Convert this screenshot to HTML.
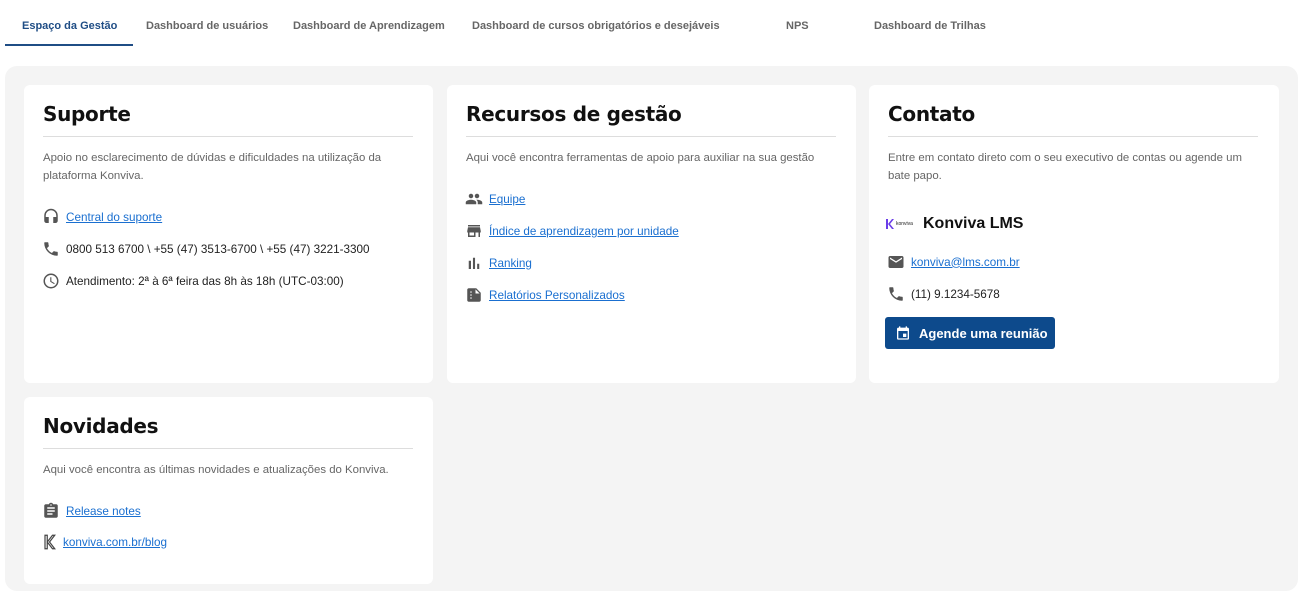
<!DOCTYPE html>
<html><head><meta charset="utf-8"><style>
*{box-sizing:border-box;margin:0;padding:0}
body{width:1300px;height:596px;background:#fff;font-family:"Liberation Sans",Arial,sans-serif;position:relative;overflow:hidden;color:#222}
.tab{position:absolute;top:20px;font-size:11px;font-weight:bold;color:#666;white-space:nowrap}
.tab.act{color:#1f4d85}
.ul{position:absolute;left:5px;top:44px;width:128px;height:2px;background:#1f4d85}
.wrap{position:absolute;left:5px;top:66px;width:1293px;height:525px;background:#f4f4f4;border-radius:12px}
.card{position:absolute;background:#fff;border-radius:6px}
.card h2{position:absolute;left:19px;top:17px;font-size:20px;font-weight:bold;color:#111;font-family:"DejaVu Sans","Liberation Sans",sans-serif;letter-spacing:-0.3px}
.card .hr{position:absolute;left:19px;top:51px;width:370px;height:1px;background:#ddd}
.card .d{position:absolute;left:19px;top:64px;width:360px;font-size:11.4px;line-height:18px;color:#666}
.it{position:absolute;left:18px;font-size:11.7px;color:#222;display:flex;align-items:center;white-space:nowrap}
.it svg{width:18px;height:18px;fill:#555;margin-right:6px}
a{color:#1a6fd0;text-decoration:underline}
.btn{position:absolute;left:16px;top:232px;width:170px;height:32px;background:#0d4a8c;border-radius:3px;color:#fff;font-weight:bold;font-size:13px;display:flex;align-items:center;padding-left:10px}
.btn svg{width:16px;height:16px;fill:#fff;margin-right:8px}
</style></head><body>
<div class="tab act" style="left:22px">Espaço da Gestão</div>
<div class="tab" style="left:146px">Dashboard de usuários</div>
<div class="tab" style="left:293px">Dashboard de Aprendizagem</div>
<div class="tab" style="left:472px">Dashboard de cursos obrigatórios e desejáveis</div>
<div class="tab" style="left:786px">NPS</div>
<div class="tab" style="left:874px">Dashboard de Trilhas</div>
<div class="ul"></div>
<div class="wrap"></div>

<div class="card" style="left:24px;top:85px;width:409px;height:298px">
<h2>Suporte</h2><div class="hr"></div>
<div class="d">Apoio no esclarecimento de dúvidas e dificuldades na utilização da plataforma Konviva.</div>
<div class="it" style="top:123px"><svg viewBox="0 0 24 24"><path d="M12 1a9 9 0 0 0-9 9v7a3 3 0 0 0 3 3h3v-8H5v-2a7 7 0 0 1 14 0v2h-4v8h3a3 3 0 0 0 3-3v-7a9 9 0 0 0-9-9z"/></svg><a>Central do suporte</a></div>
<div class="it" style="top:155px"><svg viewBox="0 0 24 24"><path d="M6.6 10.8a15.1 15.1 0 0 0 6.6 6.6l2.2-2.2c.3-.3.7-.4 1-.2 1.1.4 2.3.6 3.6.6.6 0 1 .4 1 1V20c0 .6-.4 1-1 1A17 17 0 0 1 3 4c0-.6.4-1 1-1h3.5c.6 0 1 .4 1 1 0 1.3.2 2.5.6 3.6.1.3 0 .7-.2 1z"/></svg>0800 513 6700 \ +55 (47) 3513-6700 \ +55 (47) 3221-3300</div>
<div class="it" style="top:187px"><svg viewBox="0 0 24 24"><path d="M12 2a10 10 0 1 0 0 20 10 10 0 0 0 0-20zm0 18a8 8 0 1 1 0-16 8 8 0 0 1 0 16zm.5-13H11v6l5.2 3.2.8-1.2-4.5-2.7z"/></svg>Atendimento: 2ª à 6ª feira das 8h às 18h (UTC-03:00)</div>
</div>

<div class="card" style="left:447px;top:85px;width:409px;height:298px">
<h2>Recursos de gestão</h2><div class="hr"></div>
<div class="d">Aqui você encontra ferramentas de apoio para auxiliar na sua gestão</div>
<div class="it" style="top:105px"><svg viewBox="0 0 24 24"><path d="M16 11a3 3 0 1 0 0-6 3 3 0 0 0 0 6zm-8 0a3 3 0 1 0 0-6 3 3 0 0 0 0 6zm0 2c-2.3 0-7 1.2-7 3.5V19h14v-2.5C15 14.2 10.3 13 8 13zm8 0h-1c1.2.8 2 2 2 3.5V19h6v-2.5c0-2.3-4.7-3.5-7-3.5z"/></svg><a>Equipe</a></div>
<div class="it" style="top:137px"><svg viewBox="0 0 24 24"><path d="M20 4H4v2h16V4zm1 10v-2l-1-5H4l-1 5v2h1v6h10v-6h4v6h2v-6h1zm-9 4H6v-4h6v4z"/></svg><a>Índice de aprendizagem por unidade</a></div>
<div class="it" style="top:169px"><svg viewBox="0 0 24 24"><path d="M5 9h3v11H5zm5.6-4h2.8v15h-2.8zm5.6 8H19v7h-2.8z"/></svg><a>Ranking</a></div>
<div class="it" style="top:201px"><svg viewBox="0 0 24 24"><path d="M15 3H5c-1.1 0-2 .9-2 2v14c0 1.1.9 2 2 2h14c1.1 0 2-.9 2-2V9l-6-6zM8 17a1 1 0 1 1 0-2 1 1 0 0 1 0 2zm0-4a1 1 0 1 1 0-2 1 1 0 0 1 0 2zm0-4a1 1 0 1 1 0-2 1 1 0 0 1 0 2zm6 1V4.5L19.5 10H14z"/></svg><a>Relatórios Personalizados</a></div>
</div>

<div class="card" style="left:869px;top:85px;width:410px;height:298px">
<h2>Contato</h2><div class="hr"></div>
<div class="d" style="width:370px">Entre em contato direto com o seu executivo de contas ou agende um bate papo.</div>
<div style="position:absolute;left:16px;top:130px;display:flex;align-items:center">
<svg width="32" height="16" viewBox="0 0 32 16"><path d="M1 3h2v10H1zM3 8l4-5h2L5 8l4 5H7z" fill="#6a3de8"/><text x="11" y="9" font-size="5" fill="#222" font-family="Liberation Sans">konviva</text></svg>
<span style="font-size:16px;font-weight:bold;margin-left:6px;color:#111">Konviva LMS</span></div>
<div class="it" style="top:168px"><svg viewBox="0 0 24 24"><path d="M20 4H4c-1.1 0-2 .9-2 2v12c0 1.1.9 2 2 2h16c1.1 0 2-.9 2-2V6c0-1.1-.9-2-2-2zm0 4-8 5-8-5V6l8 5 8-5v2z"/></svg><a>konviva@lms.com.br</a></div>
<div class="it" style="top:200px"><svg viewBox="0 0 24 24"><path d="M6.6 10.8a15.1 15.1 0 0 0 6.6 6.6l2.2-2.2c.3-.3.7-.4 1-.2 1.1.4 2.3.6 3.6.6.6 0 1 .4 1 1V20c0 .6-.4 1-1 1A17 17 0 0 1 3 4c0-.6.4-1 1-1h3.5c.6 0 1 .4 1 1 0 1.3.2 2.5.6 3.6.1.3 0 .7-.2 1z"/></svg>(11) 9.1234-5678</div>
<div class="btn"><svg viewBox="0 0 24 24"><path d="M19 4h-1V2h-2v2H8V2H6v2H5c-1.1 0-2 .9-2 2v14c0 1.1.9 2 2 2h14c1.1 0 2-.9 2-2V6c0-1.1-.9-2-2-2zm0 16H5V9h14v11zM12 13h5v5h-5z"/></svg>Agende uma reunião</div>
</div>

<div class="card" style="left:24px;top:397px;width:409px;height:187px">
<h2>Novidades</h2><div class="hr"></div>
<div class="d">Aqui você encontra as últimas novidades e atualizações do Konviva.</div>
<div class="it" style="top:105px"><svg viewBox="0 0 24 24"><path d="M19 3h-4.2A3 3 0 0 0 12 1a3 3 0 0 0-2.8 2H5c-1.1 0-2 .9-2 2v14c0 1.1.9 2 2 2h14c1.1 0 2-.9 2-2V5c0-1.1-.9-2-2-2zm-7 0a1 1 0 1 1 0 2 1 1 0 0 1 0-2zm2 14H7v-2h7v2zm3-4H7v-2h10v2zm0-4H7V7h10v2z"/></svg><a>Release notes</a></div>
<div class="it" style="top:136px"><svg viewBox="0 0 24 24" style="margin-right:3px"><path d="M4 3h3v18H4zM7 12l7-9h3l-7 9 7 9h-3z" fill="none" stroke="#444" stroke-width="1.6"/></svg><a>konviva.com.br/blog</a></div>
</div>
</body></html>
